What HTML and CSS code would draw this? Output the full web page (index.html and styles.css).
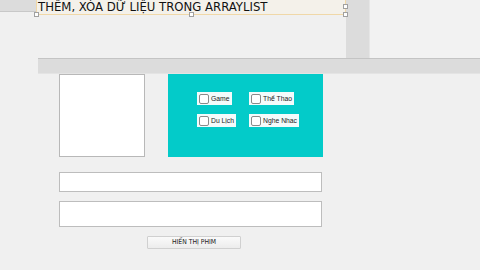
FILE: index.html
```html
<!DOCTYPE html>
<html>
<head>
<meta charset="utf-8">
<link rel="stylesheet" href="styles.css">
</head>
<body>
<div class="top">
  <div class="corner"></div>
  <div class="title">
    <span class="title-text">THÊM, XÓA DỮ LIỆU TRONG ARRAYLIST</span>
    <i class="h h-bl"></i><i class="h h-bm"></i><i class="h h-br"></i><i class="h h-rm"></i>
  </div>
  <div class="vbar"></div>
  <div class="rest"></div>
</div>
<div class="hbar"></div>
<div class="form">
  <div class="row1">
    <div class="picture"></div>
    <div class="panel">
      <label class="cb"><span class="box"></span>Game</label>
      <label class="cb"><span class="box"></span>Thể Thao</label>
      <label class="cb"><span class="box"></span>Du Lịch</label>
      <label class="cb"><span class="box"></span>Nghe Nhac</label>
    </div>
  </div>
  <div class="field"></div>
  <div class="area"></div>
  <div class="btn">HIỂN THỊ PHIM</div>
</div>
</body>
</html>
```
FILE: styles.css
```css
html, body {
  margin: 0;
  padding: 0;
  background: #f0f0f0;
  width: 480px;
  height: 270px;
  overflow: hidden;
  font-family: "DejaVu Sans", "Liberation Sans", sans-serif;
}
.top {
  display: flex;
  height: 58px;
}
.corner {
  width: 36px;
  height: 11px;
  background: #dcdcdc;
  border-bottom: 1px solid #c8c8c8;
}
.title {
  position: relative;
  width: 308px;
  height: 14px;
  border: 1px solid #f0d8a8;
  border-top: none;
  background: #f4f1ea;
}
.title-text {
  display: block;
  padding-left: 1px;
  font-family: "DejaVu Sans Condensed", "DejaVu Sans", sans-serif;
  font-stretch: condensed;
  font-size: 13px;
  line-height: 14px;
  color: #111;
  white-space: nowrap;
}
.h {
  position: absolute;
  width: 3px;
  height: 3px;
  background: #fff;
  border: 1px solid #a0a0a0;
}
.h-bl { left: -3px; bottom: -3px; }
.h-bm { left: 152px; bottom: -3px; }
.h-br { right: -3px; bottom: -3px; }
.h-rm { right: -3px; top: 4px; }
.vbar {
  width: 23px;
  background: #dcdcdc;
}
.rest {
  flex: 1;
  background: #f2f2f2;
  border-left: 1px solid #e6e6e6;
}
.hbar {
  margin-left: 38px;
  height: 14px;
  background: #dcdcdc;
  border-top: 1px solid #c4c4c4;
  border-bottom: 1px solid #e4e4e4;
}
.form {
  padding-left: 59px;
}
.row1 {
  display: flex;
  gap: 23px;
}
.picture {
  width: 84px;
  height: 81px;
  background: #fff;
  border: 1px solid #b8b8b8;
}
.panel {
  width: 155px;
  height: 83px;
  background: #03cbc9;
  box-sizing: border-box;
  padding: 18px 0 0 29px;
  display: grid;
  grid-template-columns: 52px auto;
  grid-auto-rows: 13px;
  row-gap: 9px;
  align-content: start;
  justify-items: start;
}
.cb {
  display: flex;
  align-items: center;
  height: 13px;
  padding: 0 2px;
  background: #f4fbfb;
  font-family: "Liberation Sans", sans-serif;
  font-size: 6.8px;
  color: #222;
  white-space: nowrap;
}
.box {
  width: 8px;
  height: 8px;
  margin-right: 2px;
  border: 1px solid #8a8a8a;
  border-radius: 2px;
  background: #fff;
}
.field {
  margin-top: 15px;
  width: 261px;
  height: 18px;
  background: #fff;
  border: 1px solid #bdbdbd;
}
.area {
  margin-top: 9px;
  width: 261px;
  height: 24px;
  background: #fff;
  border: 1px solid #bdbdbd;
}
.btn {
  margin: 9px 0 0 88px;
  width: 92px;
  height: 11px;
  border: 1px solid #d0d0d0;
  border-radius: 1px;
  background: linear-gradient(#fafafa, #ececec);
  font-family: "DejaVu Sans Condensed", "DejaVu Sans", sans-serif;
  font-stretch: condensed;
  font-size: 6.8px;
  line-height: 11px;
  text-align: center;
  color: #222;
}
```
